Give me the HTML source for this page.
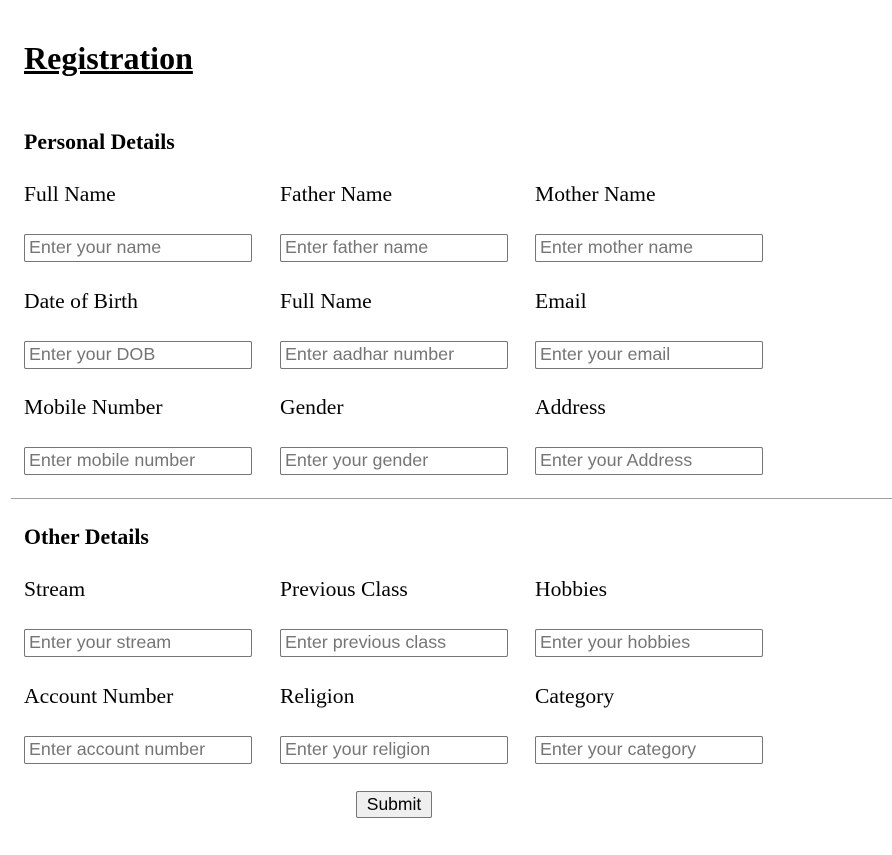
<!DOCTYPE html>
<html><head><meta charset="utf-8"><style>
body{margin:0;width:892px;height:855px;background:#fff;position:relative;font-family:"Liberation Serif",serif;color:#000;overflow:hidden}
.t{position:absolute;line-height:1;white-space:nowrap}
h1{position:absolute;left:24px;top:42px;margin:0;font-size:32px;line-height:1;text-decoration:underline;font-weight:bold}
.h{font-size:21.8px;font-weight:bold;left:24px}
.l{font-size:21.6px}
input{position:absolute;box-sizing:border-box;width:228px;height:28px;border:1px solid #767676;border-radius:2px;padding:0 4px 1px;font-family:"Liberation Sans",Arial,sans-serif;font-size:17.9px;margin:0}
input::placeholder{color:#757575}
hr{position:absolute;left:11px;top:498px;width:881px;margin:0;border:0;border-top:1px solid #a0a0a0;height:0}
button{position:absolute;left:356px;top:791px;width:76px;height:27px;font-family:"Liberation Sans",Arial,sans-serif;font-size:17.5px;border:1px solid #767676;background:#efefef;border-radius:2px;padding:0 0 1px}
</style></head><body>
<h1>Registration</h1>
<div class="t h" style="top:132px">Personal Details</div>
<div class="t l" style="left:24px;top:184px">Full Name</div>
<div class="t l" style="left:280px;top:184px">Father Name</div>
<div class="t l" style="left:535px;top:184px">Mother Name</div>
<input style="left:24px;top:234px" placeholder="Enter your name">
<input style="left:280px;top:234px" placeholder="Enter father name">
<input style="left:535px;top:234px" placeholder="Enter mother name">
<div class="t l" style="left:24px;top:291px">Date of Birth</div>
<div class="t l" style="left:280px;top:291px">Full Name</div>
<div class="t l" style="left:535px;top:291px">Email</div>
<input style="left:24px;top:341px" placeholder="Enter your DOB">
<input style="left:280px;top:341px" placeholder="Enter aadhar number">
<input style="left:535px;top:341px" placeholder="Enter your email">
<div class="t l" style="left:24px;top:397px">Mobile Number</div>
<div class="t l" style="left:280px;top:397px">Gender</div>
<div class="t l" style="left:535px;top:397px">Address</div>
<input style="left:24px;top:447px" placeholder="Enter mobile number">
<input style="left:280px;top:447px" placeholder="Enter your gender">
<input style="left:535px;top:447px" placeholder="Enter your Address">
<hr>
<div class="t h" style="top:527px">Other Details</div>
<div class="t l" style="left:24px;top:579px">Stream</div>
<div class="t l" style="left:280px;top:579px">Previous Class</div>
<div class="t l" style="left:535px;top:579px">Hobbies</div>
<input style="left:24px;top:629px" placeholder="Enter your stream">
<input style="left:280px;top:629px" placeholder="Enter previous class">
<input style="left:535px;top:629px" placeholder="Enter your hobbies">
<div class="t l" style="left:24px;top:686px">Account Number</div>
<div class="t l" style="left:280px;top:686px">Religion</div>
<div class="t l" style="left:535px;top:686px">Category</div>
<input style="left:24px;top:736px" placeholder="Enter account number">
<input style="left:280px;top:736px" placeholder="Enter your religion">
<input style="left:535px;top:736px" placeholder="Enter your category">
<button>Submit</button>
</body></html>
